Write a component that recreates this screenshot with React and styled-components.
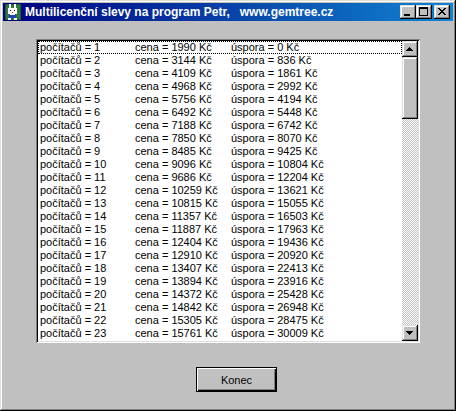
import React from "react";
import styled, { createGlobalStyle } from "styled-components";

const GlobalStyle = createGlobalStyle`
  html, body { margin: 0; padding: 0; background: #c0c0c0; }
  body { font-family: "Liberation Sans", Arial, sans-serif; }
  * { box-sizing: border-box; }
`;

const raised = `
  box-shadow: inset -1px -1px #000, inset 1px 1px #dfdfdf,
    inset -2px -2px #808080, inset 2px 2px #fff;
`;

const Window = styled.div`
  width: 456px;
  height: 411px;
  background: #c0c0c0;
  padding: 3px;
  display: flex;
  flex-direction: column;
  box-shadow: inset -1px -1px #000, inset 1px 1px #dfdfdf,
    inset -2px -2px #808080, inset 2px 2px #fff;
`;

const TitleBar = styled.div`
  height: 18px;
  display: flex;
  align-items: center;
  padding: 0 3px 0 2px;
  background: linear-gradient(90deg, #000080 0%, #1084d0 100%);
`;

const TitleText = styled.div`
  flex: 1;
  margin-left: 4px;
  color: #fff;
  font: bold 12px "Liberation Sans", Arial, sans-serif;
  white-space: pre;
  line-height: 18px;
  overflow: hidden;
`;

const CaptionButton = styled.button`
  width: 16px;
  height: 14px;
  padding: 0;
  border: 0;
  margin-left: ${(p) => (p.$gap ? "2px" : "0")};
  background: #c0c0c0;
  ${raised}
  display: block;
  svg { display: block; }
`;

const Body = styled.div`
  flex: 1;
  padding: 18px 0 0 33px;
  display: flex;
  flex-direction: column;
`;

const ListBox = styled.div`
  width: 384px;
  height: 304px;
  padding: 2px;
  display: flex;
  background: #fff;
  box-shadow: inset 1px 1px #808080, inset -1px -1px #fff,
    inset 2px 2px #000, inset -2px -2px #dfdfdf;
`;

const ListContent = styled.div`
  flex: 1;
  overflow: hidden;
`;

const Row = styled.div`
  display: grid;
  grid-template-columns: 95px 96px 1fr;
  height: 13px;
  line-height: 13px;
  padding-left: 2px;
  font: 11px "Liberation Sans", Arial, sans-serif;
  color: #000;
  white-space: pre;
  outline: ${(p) => (p.$focus ? "1px dotted #000" : "none")};
  outline-offset: -1px;
`;

const ScrollBar = styled.div`
  width: 16px;
  display: flex;
  flex-direction: column;
`;

const ArrowButton = styled.div`
  width: 16px;
  height: 16px;
  background: #c0c0c0;
  ${raised}
  svg { display: block; }
`;

const Track = styled.div`
  flex: 1;
  display: flex;
  flex-direction: column;
  background-color: #c0c0c0;
  background-image: conic-gradient(#fff 25%, #c0c0c0 0 50%, #fff 0 75%, #c0c0c0 0);
  background-size: 2px 2px;
`;

const Thumb = styled.div`
  height: 62px;
  background: #c0c0c0;
  ${raised}
`;

const Footer = styled.div`
  margin-top: 24px;
  padding-left: 160px;
`;

const DefaultButton = styled.button`
  width: 81px;
  height: 25px;
  padding: 0;
  border: 1px solid #000;
  background: #c0c0c0;
  box-shadow: inset 1px 1px #fff, inset -1px -1px #000,
    inset -2px -2px #808080;
  font: 11px "Liberation Sans", Arial, sans-serif;
  color: #000;
`;

const data = [
  [1, 1990, 0], [2, 3144, 836], [3, 4109, 1861], [4, 4968, 2992],
  [5, 5756, 4194], [6, 6492, 5448], [7, 7188, 6742], [8, 7850, 8070],
  [9, 8485, 9425], [10, 9096, 10804], [11, 9686, 12204], [12, 10259, 13621],
  [13, 10815, 15055], [14, 11357, 16503], [15, 11887, 17963], [16, 12404, 19436],
  [17, 12910, 20920], [18, 13407, 22413], [19, 13894, 23916], [20, 14372, 25428],
  [21, 14842, 26948], [22, 15305, 28475], [23, 15761, 30009],
];

const Px = ({ cells }) =>
  cells.map(([x, y, w, h], i) => (
    <rect key={i} x={x} y={y} width={w} height={h} fill="#000" />
  ));

const MinGlyph = () => (
  <svg width="16" height="14" shapeRendering="crispEdges">
    <Px cells={[[4, 9, 6, 2]]} />
  </svg>
);

const MaxGlyph = () => (
  <svg width="16" height="14" shapeRendering="crispEdges">
    <Px cells={[[3, 2, 9, 2], [3, 2, 1, 9], [11, 2, 1, 9], [3, 10, 9, 1]]} />
  </svg>
);

const closeCells = [];
for (let i = 0; i < 7; i++) {
  const a = i < 4 ? i : 6 - i;
  closeCells.push([4 + a, 3 + i, 2, 1]);
  closeCells.push([4 + 6 - a, 3 + i, 2, 1]);
}
const CloseGlyph = () => (
  <svg width="16" height="14" shapeRendering="crispEdges">
    <Px cells={closeCells} />
  </svg>
);

const Arrow = ({ down }) => {
  const cells = [];
  for (let i = 0; i < 4; i++) {
    const w = 1 + i * 2;
    const y = down ? 9 - i : 6 + i;
    cells.push([7 - i, y, w, 1]);
  }
  return (
    <svg width="16" height="16" shapeRendering="crispEdges">
      <Px cells={cells} />
    </svg>
  );
};

const RabbitIcon = () => (
  <svg width="16" height="16" viewBox="0 0 16 16" shapeRendering="crispEdges">
    <rect x="0" y="0" width="16" height="16" fill="#1e5a2a" />
    <rect x="1" y="1" width="14" height="14" fill="#2f7a3a" />
    <rect x="4" y="0" width="2" height="5" fill="#fff" />
    <rect x="9" y="0" width="2" height="5" fill="#fff" />
    <rect x="3" y="4" width="9" height="6" fill="#fff" />
    <rect x="5" y="6" width="1" height="1" fill="#000" />
    <rect x="9" y="6" width="1" height="1" fill="#000" />
    <rect x="7" y="8" width="1" height="1" fill="#d04040" />
    <rect x="4" y="10" width="7" height="4" fill="#2040c0" />
    <rect x="5" y="10" width="5" height="1" fill="#fff" />
    <rect x="3" y="14" width="3" height="2" fill="#fff" />
    <rect x="9" y="14" width="3" height="2" fill="#fff" />
  </svg>
);

export default function App() {
  return (
    <>
      <GlobalStyle />
      <Window>
        <TitleBar>
          <RabbitIcon />
          <TitleText>{"Multilicenční slevy na program Petr,   www.gemtree.cz"}</TitleText>
          <CaptionButton aria-label="minimize"><MinGlyph /></CaptionButton>
          <CaptionButton aria-label="maximize"><MaxGlyph /></CaptionButton>
          <CaptionButton aria-label="close" $gap><CloseGlyph /></CaptionButton>
        </TitleBar>
        <Body>
          <ListBox>
            <ListContent>
              {data.map(([n, c, s], i) => (
                <Row key={n} $focus={i === 0}>
                  <span>{`počítačů = ${n}`}</span>
                  <span>{`cena = ${c} Kč`}</span>
                  <span>{`úspora = ${s} Kč`}</span>
                </Row>
              ))}
            </ListContent>
            <ScrollBar>
              <ArrowButton><Arrow /></ArrowButton>
              <Track><Thumb /></Track>
              <ArrowButton><Arrow down /></ArrowButton>
            </ScrollBar>
          </ListBox>
          <Footer>
            <DefaultButton>Konec</DefaultButton>
          </Footer>
        </Body>
      </Window>
    </>
  );
}
